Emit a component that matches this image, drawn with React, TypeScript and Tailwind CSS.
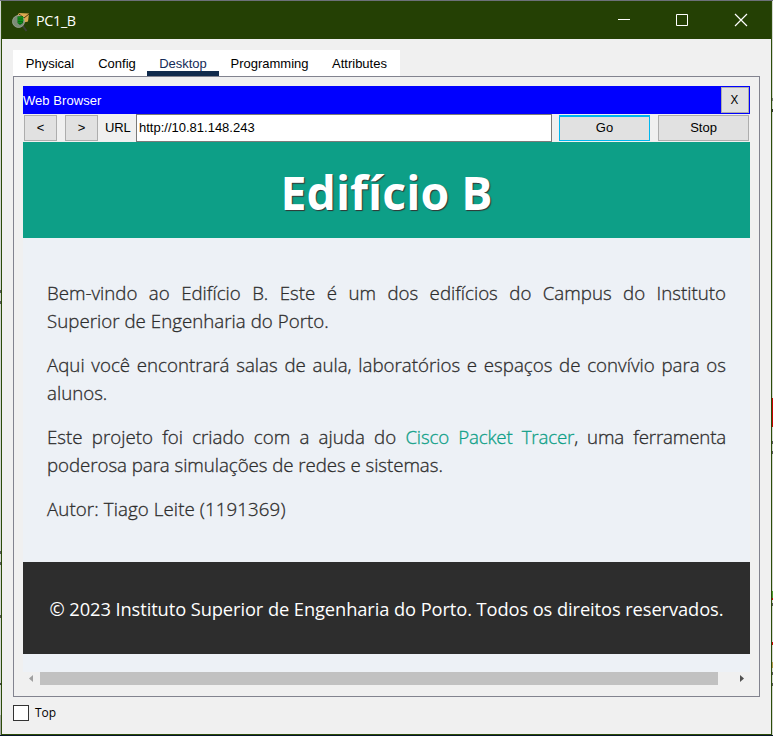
import React from "react";

const ui = "font-['Liberation_Sans',Arial,sans-serif]";
const web = "font-['Open_Sans','Noto_Sans',sans-serif]";

function Line({ children, full = false }: { children: React.ReactNode; full?: boolean }) {
  return (
    <span className={`block whitespace-nowrap ${full ? "[text-align-last:justify]" : ""}`}>
      {children}
    </span>
  );
}

function PacketIcon() {
  return (
    <svg className="mt-[3px]" width="20" height="20" viewBox="0 0 20 20">
      <path d="m6 4 2-3 10 .5-1 8-6 1.5z" fill="#dba850" />
      <path d="m8 2 5 4 5-4" stroke="#4a3510" fill="none" />
      <path d="m11.500 13.500 4 5.500" stroke="#3c403c" strokeWidth="1.800" />
      <circle cx="7.500" cy="9.500" r="6" fill="#7d8c77" stroke="#a0aa9a" strokeWidth=".8" />
      <path d="M6.500 4.500 12 4v7l-3 2-2.500-2z" fill="#0b6d12" />
      <path d="M8 5v6m2-6v6m2-6v4" stroke="#14b524" strokeDasharray="1.500 1" />
    </svg>
  );
}

const tabs = [
  { label: "Physical", width: "w-[74px]" },
  { label: "Config", width: "w-[60px]" },
  { label: "Desktop", width: "w-[72px]" },
  { label: "Programming", width: "w-[101px]" },
  { label: "Attributes", width: "w-[80px] pr-px" },
];

const edgeMarks = [
  "left-0 top-[289px] h-[3px] bg-[#555]",
  "left-0 top-[300px] h-[3px] bg-[#555]",
  "left-0 top-[550px] h-[3px] bg-[#555]",
  "left-0 top-[561px] h-[3px] bg-[#555]",
  "left-0 top-[614px] h-[3px] bg-[#555]",
  "left-0 top-[682px] h-[2px] bg-[#444]",
  "left-0 top-[714px] h-[20px] bg-[#a4a8a4]",
  "left-[772px] top-[97px] h-[3px] bg-[#777]",
  "left-[772px] top-[108px] h-[3px] bg-[#333]",
  "left-[772px] top-[397px] h-[29px] bg-[#c80000]",
  "left-[772px] top-[440px] h-[3px] bg-[#555]",
  "left-[772px] top-[450px] h-[3px] bg-[#555]",
  "left-[772px] top-[590px] h-[7px] bg-[#4b9b30]",
  "left-[772px] top-[597px] h-[2px] bg-[#c80000]",
  "left-[772px] top-[602px] h-[3px] bg-[#555]",
  "left-[772px] top-[641px] h-[3px] bg-[#c80000]",
  "left-[772px] top-[661px] h-[6px] bg-[#b49a50]",
  "left-[772px] top-[671px] h-[3px] bg-[#555]",
  "left-[772px] top-[682px] h-[3px] bg-[#555]",
];

export default function App() {
  return (
    <div className={`relative h-[736px] w-[773px] overflow-hidden border-b border-t border-b-[#07152b] border-t-[#6c7078] bg-[#d2d6d2] pl-px ${ui}`}>
      {edgeMarks.map((m) => <span key={m} className={`absolute w-px ${m}`} />)}
      <div className="flex h-[734px] w-[771px] flex-col border-x border-b border-[#2c4c08] bg-[#f0f0f0]">
        <header className="flex h-[38px] shrink-0 items-center bg-[#244004] pl-[9px] text-white">
          <PacketIcon />
          <span className="ml-[5px] mt-px text-[14.4px] tracking-[-0.35px] font-['Open_Sans',sans-serif]">PC1_B</span>
          <svg className="ml-auto mr-[22px]" width="132" height="14" viewBox="0 0 132 14" fill="none" stroke="white">
            <path d="M1 6.5h12M59.500 1.500h11v11h-11z" />
            <path d="m118 1 12 12m0-12-12 12" strokeWidth="1.2" />
          </svg>
        </header>
        <nav className="ml-[11px] mt-[11px] flex h-[26px] w-[387px] shrink-0 bg-white text-[13px] text-black">
          {tabs.map((t) => (
            <div key={t.label} className={`flex h-[26px] items-start justify-center whitespace-nowrap pt-1 leading-[20px] ${t.width} ${t.label === "Desktop" ? "border-b-[5px] border-[#102a4c] text-[#142b58]" : ""}`}>
              {t.label}
            </div>
          ))}
        </nav>
        <main className="ml-[11px] h-[621px] w-[747px] shrink-0 border border-[#82838f] px-[9px] pt-[9px]">
          <div className="flex h-[28px] items-center justify-between bg-[#0000ff] text-[13px] text-white">
            <span className="mt-px tracking-[0.05px]">Web Browser</span>
            <button className="mr-px h-[26px] w-[28px] border border-[#adadad] bg-[#e1e1e1] pr-0.5 text-black"><span className="inline-block scale-x-90">X</span></button>
          </div>
          <div className="flex h-[28px] items-center text-[13px] text-black">
            <button className="ml-px h-[26px] w-[33px] border border-[#adadad] bg-[#e1e1e1]">&lt;</button>
            <button className="ml-2 h-[26px] w-[33px] border border-[#adadad] bg-[#e1e1e1]">&gt;</button>
            <span className="ml-[7px] w-[31px] tracking-[-0.2px]">URL</span>
            <div className="h-[28px] w-[416px] border border-[#7a7a7a] bg-white pl-[2px] leading-[26px]">http://10.81.148.243</div>
            <button className="ml-[7px] h-[26px] w-[91px] border border-[#00b7f0] bg-[#e1e1e1] [box-shadow:inset_0_1px_#00b7f0]">Go</button>
            <button className="ml-2 h-[26px] w-[91px] border border-[#adadad] bg-[#e1e1e1]">Stop</button>
          </div>
          <article className={`h-[530px] w-[727px] bg-[#edf1f6] text-[#333] ${web}`}>
            <h1 className="h-[96px] bg-[#0d9f87] pt-[2px] text-center text-[46.5px] font-bold leading-[96px] text-white [text-shadow:1px_1px_1px_#333]">Edifício B</h1>
            <section className="flex h-[324px] flex-col gap-4 px-6 pt-[41px] text-[18.7px] font-light leading-[28px] text-[#2d2d2d] [-webkit-text-stroke:0.3px]">
              <p>
                <Line full>Bem-vindo ao Edifício B. Este é um dos edifícios do Campus do Instituto</Line>
                <Line><span className="tracking-[0.03px]">Superior de Engenharia do Porto.</span></Line>
              </p>
              <p>
                <Line full>Aqui você encontrará salas de aula, laboratórios e espaços de convívio para os</Line>
                <Line>alunos.</Line>
              </p>
              <p>
                <Line full>Este projeto foi criado com a ajuda do <a className="tracking-[-0.15px] text-[#0d9f87]">Cisco Packet Tracer</a><span className="tracking-[-0.15px]">, uma ferramenta</span></Line>
                <Line><span className="tracking-[-0.05px]">poderosa para simulações de redes e sistemas.</span></Line>
              </p>
              <p><Line><span className="tracking-[0.1px]">Autor: Tiago Leite (1191369)</span></Line></p>
            </section>
            <footer className="h-[92px] bg-[#2d2d2d] pt-[1px] text-center text-[18.3px] leading-[92px] tracking-[-0.09px] text-white whitespace-nowrap">© 2023 Instituto Superior de Engenharia do Porto. Todos os direitos reservados.</footer>
          </article>
          <div className="flex h-[13px] w-[727px] items-center">
            <svg width="17" height="13" viewBox="0 0 17 13"><path d="M10 3v7L6 6.5z" fill="#a0a0a0" /></svg>
            <div className="h-[13px] w-[678px] bg-[#c1c1c1]" />
            <svg className="ml-auto" width="15" height="13" viewBox="0 0 15 13"><path d="M5 3v7l4-3.5z" fill="#505050" /></svg>
          </div>
        </main>
        <label className="ml-[11px] mt-[8px] flex h-4 items-center text-[13px] text-black">
          <span className="h-4 w-4 border border-[#333] bg-white" />
          <span className="ml-[6px] font-['Open_Sans',sans-serif] text-[12px]">Top</span>
        </label>
      </div>
    </div>
  );
}
